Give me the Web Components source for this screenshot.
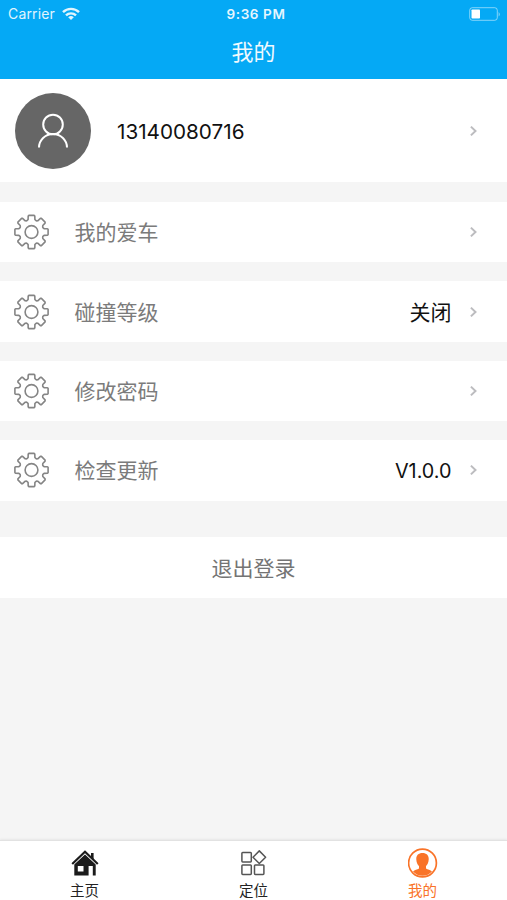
<!DOCTYPE html>
<html lang="zh-CN">
<head>
<meta charset="utf-8">
<title>我的</title>
<style>
    body {
        margin: 0;
        background: #f5f5f5;
        font-family: Inter, "Noto Sans CJK SC", sans-serif;
    }
</style>
</head>
<body>
<mine-page></mine-page>

<script>
function define(name, html) {
    const template = document.createElement('template');
    template.innerHTML = html;

    class Element extends HTMLElement {
        constructor() {
            super();
            this.attachShadow({mode: 'open'});
            this.shadowRoot.appendChild(template.content.cloneNode(true));
        }
    }
    window.customElements.define(name, Element);
}

// outline of the gear: one tooth, turned eight times
function gearPath() {
    const tooth = [[-4.4, -11.4], [-3.4, -12.6], [-3.3, -15.9], [-2.6, -16.6], [2.6, -16.6], [3.3, -15.9], [3.4, -12.6], [4.4, -11.4]];
    let d = '';
    for (let i = 0; i < 8; i++) {
        const a = i * Math.PI / 4;
        tooth.forEach(([x, y]) => {
            const px = x * Math.cos(a) - y * Math.sin(a);
            const py = x * Math.sin(a) + y * Math.cos(a);
            d += (d ? 'L' : 'M') + px.toFixed(2) + ' ' + py.toFixed(2);
        });
    }
    return d + 'Z';
}

define('status-bar', `
    <style>
        :host {
            display: grid;
            grid-template-columns: 1fr auto 1fr;
            align-items: center;
            height: 27px;
            padding: 0 6px 0 8px;
            color: #fff;
            font-size: 14px;
            line-height: 26px;
        }
        .carrier {
            display: flex;
            align-items: center;
            gap: 7px;
            letter-spacing: 0.15px;
            opacity: 0.88;
        }
        .time {
            font-size: 13.5px;
            font-weight: 600;
            letter-spacing: 0.6px;
            opacity: 0.9;
            padding: 1px 0 0 3px;
        }
        .battery {
            justify-self: end;
        }
        svg {
            display: block;
        }
    </style>
    <div class="carrier">
        <span>Carrier</span>
        <svg width="18" height="14" viewBox="0 0 18 14" fill="none" stroke="#fff" stroke-width="2.4">
            <path d="M1 5.2a11.3 11.3 0 0 1 16 0"/>
            <path d="M4 8.4a7.1 7.1 0 0 1 10 0"/>
            <path d="M9 13L6.2 10.3a4 4 0 0 1 5.6 0z" fill="#fff" stroke="none"/>
        </svg>
    </div>
    <div class="time">9:36 PM</div>
    <svg class="battery" width="32" height="14" viewBox="0 0 32 14">
        <rect x="0.7" y="0.7" width="27.6" height="12.6" rx="2.6" fill="none" stroke="#fff" stroke-opacity="0.5"/>
        <rect x="2.5" y="2.5" width="8.5" height="9" rx="0.8" fill="#fff"/>
        <path d="M29.7 5v4.6q2-2.3 0-4.6z" fill="#fff" fill-opacity="0.6"/>
    </svg>
`);

define('nav-header', `
    <style>
        :host {
            display: block;
            height: 79px;
            background: #05a9f5;
        }
        .title {
            color: #fff;
            font-size: 22px;
            line-height: 51px;
            text-align: center;
            opacity: 0.94;
        }
    </style>
    <status-bar></status-bar>
    <div class="title"><slot></slot></div>
`);

define('chevron-icon', `
    <style>
        :host {
            display: block;
            flex: none;
        }
        svg {
            display: block;
        }
    </style>
    <svg width="8" height="12" viewBox="0 0 8 12" fill="none" stroke="#bcbcbf" stroke-width="2">
        <path d="M0.9 1.6L5.5 6L0.9 10.4"/>
    </svg>
`);

define('user-card', `
    <style>
        :host {
            display: flex;
            align-items: center;
            height: 103px;
            box-sizing: border-box;
            padding: 0 29px 0 15px;
            background: #fff;
        }
        svg {
            flex: none;
        }
        .phone {
            flex: 1;
            margin-left: 26px;
            padding-top: 2px;
            color: #111;
            font-size: 20.7px;
            line-height: 28px;
        }
    </style>
    <svg width="76" height="76" viewBox="0 0 76 76" fill="none" stroke="#fff" stroke-width="2">
        <circle cx="38" cy="38" r="38" fill="#666" stroke="none"/>
        <circle cx="38" cy="31.5" r="9.8"/>
        <path d="M24 54.5a14 13.5 0 0 1 28 0"/>
    </svg>
    <div class="phone"><slot></slot></div>
    <chevron-icon></chevron-icon>
`);

define('setting-row', `
    <style>
        :host {
            display: flex;
            align-items: center;
            height: 60.7px;
            box-sizing: border-box;
            padding: 0 29px 0 13px;
            background: #fff;
            font-size: 21px;
            line-height: 30px;
        }
        svg {
            flex: none;
        }
        .label {
            flex: 1;
            margin-left: 25.5px;
            padding-top: 2px;
            color: #7b7b7b;
        }
        .value {
            margin-right: 18.5px;
            padding-top: 2px;
            color: #111;
        }
        ::slotted(.latin) {
            font-size: 19.8px;
        }
    </style>
    <svg width="36" height="36" viewBox="-18.5 -18 36 36" fill="none" stroke="#858585" stroke-width="1.6" stroke-linejoin="round">
        <path d="${gearPath()}"/>
        <circle r="6.4"/>
    </svg>
    <div class="label"><slot></slot></div>
    <div class="value"><slot name="value"></slot></div>
    <chevron-icon></chevron-icon>
`);

define('logout-button', `
    <style>
        :host {
            display: block;
            height: 61px;
            background: #fff;
            color: #747474;
            font-size: 21px;
            line-height: 63px;
            text-align: center;
        }
    </style>
    <slot></slot>
`);

define('tab-item', `
    <style>
        :host {
            display: flex;
            flex: 1;
            flex-direction: column;
            align-items: center;
            padding-top: 6px;
            color: #222;
            font-size: 14.5px;
            line-height: 20px;
        }
        .icon {
            height: 33px;
        }
        .text {
            padding-top: 1.5px;
        }
    </style>
    <div class="icon"><slot name="icon"></slot></div>
    <div class="text"><slot></slot></div>
`);

define('tab-bar', `
    <style>
        :host {
            display: flex;
            height: 60px;
            box-sizing: border-box;
            border-top: 1px solid #e2e2e2;
            background: #fff;
            box-shadow: 0 -1px 2px rgba(0, 0, 0, 0.06);
        }
        svg {
            display: block;
        }
        .active {
            color: #f97328;
        }
    </style>
    <tab-item>
        <svg slot="icon" width="30" height="32" viewBox="0 0 30 32">
            <path d="M21 6h2.6v7L21 10.600z" fill="#1b1b1b"/>
            <path d="M2.2 17L15 4.8L27.8 17" fill="none" stroke="#1b1b1b" stroke-width="2.2"/>
            <path fill-rule="evenodd" fill="#1b1b1b" d="M4.300 17.600L15 7.500L25.700 17.600V28.500H22.800V19H18.600V28.500H4.300ZM7.800 19V24.400H13.500V19Z"/>
        </svg>
        主页
    </tab-item>
    <tab-item>
        <svg slot="icon" width="28" height="32" viewBox="0.5 0 28 32" fill="none" stroke="#555" stroke-width="1.5">
            <rect x="2.4" y="5.5" width="9.4" height="9.4" rx="0.8"/>
            <rect x="2.4" y="18" width="9.4" height="9.4" rx="0.8"/>
            <rect x="15" y="18" width="9.4" height="9.4" rx="0.8"/>
            <path d="M19.8 3.9L26.1 10.2L19.8 16.5L13.5 10.2Z" stroke-linejoin="round"/>
        </svg>
        定位
    </tab-item>
    <tab-item class="active">
        <svg slot="icon" width="30" height="32" viewBox="0.5 0 30 32">
            <circle cx="15" cy="16" r="13.9" fill="none" stroke="#f97328" stroke-width="1.7"/>
            <path fill="#f97328" d="M15 6c4.200 0 6.500 2.600 6.200 6.400c-.2 3.100-1.300 5.200-2.700 6.600v2.400c1.600 1.100 4.500 1.300 6 3.200a12.700 12.700 0 0 1-19 0c1.500-1.900 4.400-2.100 6-3.200v-2.400c-1.400-1.400-2.500-3.500-2.700-6.600c-.3-3.800 2-6.400 6.200-6.400z"/>
        </svg>
        我的
    </tab-item>
`);

define('mine-page', `
    <style>
        :host {
            display: flex;
            flex-direction: column;
            width: 507px;
            height: 900px;
            background: #f5f5f5;
        }
        .settings {
            display: flex;
            flex-direction: column;
            gap: 18.7px;
            margin: 19.8px 0 36px;
        }
        tab-bar {
            margin-top: auto;
        }
    </style>
    <nav-header>我的</nav-header>
    <user-card>13140080716</user-card>
    <div class="settings">
        <setting-row>我的爱车</setting-row>
        <setting-row>碰撞等级<span slot="value">关闭</span></setting-row>
        <setting-row>修改密码</setting-row>
        <setting-row>检查更新<span slot="value" class="latin">V1.0.0</span></setting-row>
    </div>
    <logout-button>退出登录</logout-button>
    <tab-bar></tab-bar>
`);
</script>
</body>
</html>
